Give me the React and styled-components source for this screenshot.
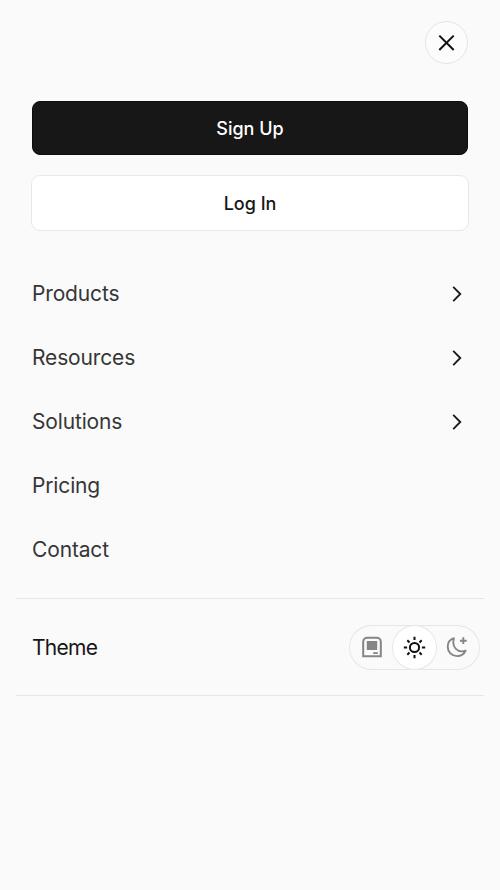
import { useState } from "react";
import styled, { createGlobalStyle } from "styled-components";

const GlobalStyle = createGlobalStyle`
  * {
    box-sizing: border-box;
  }

  body {
    margin: 0;
    background: #fafafa;
    font-family: Inter, "Liberation Sans", sans-serif;
    color: #171717;
  }

  button {
    font-family: inherit;
    color: inherit;
    padding: 0;
    cursor: pointer;
  }
`

const Menu = styled.div`
  min-height: 890px;
  padding: 21px 16px 0;
`

const Header = styled.header`
  display: flex;
  justify-content: flex-end;
  padding-right: 16px;
`

const CloseButton = styled.button`
  display: flex;
  align-items: center;
  justify-content: center;
  width: 43px;
  height: 43px;
  border: 1px solid #e4e4e4;
  border-radius: 50%;
  background: #fcfcfc;
`

const Actions = styled.div`
  display: flex;
  flex-direction: column;
  gap: 20px;
  padding: 37px 15px 0;
`

const ActionButton = styled.button`
  height: ${({ $primary }) => ($primary ? "54px" : "56px")};
  margin: ${({ $primary }) => ($primary ? "0 1px" : "0")};
  padding-top: 2px;
  border: 1px solid ${({ $primary }) => ($primary ? "#0c0c0c" : "#e8e8e8")};
  border-radius: ${({ $primary }) => ($primary ? "8px" : "9px")};
  background: ${({ $primary }) => ($primary ? "#171717" : "#fff")};
  color: ${({ $primary }) => ($primary ? "#fff" : "#171717")};
  font-size: 18px;
  font-weight: 500;
  line-height: 24px;
`

const Nav = styled.nav`
  display: flex;
  flex-direction: column;
  padding: 30px 16px 17px;
`

const NavItem = styled.button`
  display: flex;
  align-items: center;
  justify-content: space-between;
  height: 64px;
  padding: 1px 5px 0 0;
  border: none;
  background: none;
  color: #363636;
  font-size: 21px;
  font-weight: 400;
  letter-spacing: -0.15px;
`

const ThemeRow = styled.div`
  display: flex;
  align-items: center;
  justify-content: space-between;
  height: 98px;
  padding: 0 4px 0 16px;
  border-top: 1px solid #e6e6e6;
  border-bottom: 1px solid #e6e6e6;
  font-size: 21px;
  letter-spacing: -0.7px;
`

const ThemeSwitch = styled.div`
  display: flex;
  align-items: center;
  justify-content: space-between;
  width: 131px;
  height: 45px;
  border-radius: 23px;
  box-shadow: inset 0 0 0 1px #e6e6e6;
`

const ThemeOption = styled.button`
  display: flex;
  align-items: center;
  justify-content: center;
  width: ${({ $active }) => ($active ? "45px" : "43px")};
  height: 45px;
  border: none;
  border-radius: 50%;
  background: ${({ $active }) => ($active ? "#fff" : "transparent")};
  box-shadow: ${({ $active }) => ($active ? "inset 0 0 0 1px #e6e6e6" : "none")};
  color: ${({ $active }) => ($active ? "#111" : "#858585")};

  &:first-child {
    padding-left: 3px;
  }

  &:last-child {
    padding-right: 3px;
  }
`

const CloseIcon = () => (
    <svg width="17" height="17" viewBox="0 0 17 17" fill="none" stroke="#111" strokeWidth="2">
        <path d="M1.3 1.6L15.7 16M15.7 1.6L1.3 16" />
    </svg>
)

const ChevronIcon = () => (
    <svg width="12" height="16" viewBox="0 0 12 16" fill="none" stroke="#171717" strokeWidth="1.8">
        <path d="M2.2 0.9L9.3 8L2.2 15.1" />
    </svg>
)

const DeviceIcon = () => (
    <svg width="22" height="22" viewBox="0 0 22 22" fill="none">
        <path
            d="M2.2 20.2V5.7C2.2 3.5 3.9 1.7 6.2 1.7H15.8C18.1 1.7 19.8 3.5 19.8 5.7V20.2Z"
            stroke="currentColor"
            strokeWidth="2"
        />
        <rect x="5.8" y="5" width="10.4" height="9" rx="0.6" fill="currentColor" />
        <path d="M12.2 17.1H16.8" stroke="currentColor" strokeWidth="1.8" />
    </svg>
)

const SunIcon = () => (
    <svg width="23" height="23" viewBox="0 0 23 23" fill="none" stroke="currentColor" strokeWidth="2">
        <circle cx="11.5" cy="11.5" r="4.6" />
        <path d="M11.5 0.8V4.1M11.5 18.9V22.2M0.8 11.5H4.1M18.9 11.5H22.2" />
        <path d="M4.3 4.3L6.5 6.5M16.5 16.5L18.7 18.7M4.3 18.7L6.5 16.5M16.5 6.5L18.7 4.3" />
    </svg>
)

const MoonIcon = () => (
    <svg width="22" height="22" viewBox="0 0 22 22" fill="none" stroke="currentColor" strokeWidth="1.9">
        <path
            d="M7.9 2.2C4.2 3.4 1.7 6.7 1.7 10.8C1.7 16 5.8 20.1 11 20.1C14.9 20.1 18.2 17.8 19.6 14.6C18.5 15.1 17.3 15.4 16 15.4C11.2 15.4 7.3 11.5 7.3 6.7C7.3 5.1 7.5 3.6 7.9 2.2Z"
            strokeLinejoin="round"
        />
        <path d="M17.3 1.3V8.1M13.9 4.7H20.7" />
    </svg>
)

const navItems = [
    { label: "Products", expandable: true },
    { label: "Resources", expandable: true },
    { label: "Solutions", expandable: true },
    { label: "Pricing" },
    { label: "Contact" },
]

const themes = [
    { name: "system", icon: DeviceIcon },
    { name: "light", icon: SunIcon },
    { name: "dark", icon: MoonIcon },
]

const App = () => {
    const [theme, setTheme] = useState("light");

    return (
        <>
            <GlobalStyle />
            <Menu>
                <Header>
                    <CloseButton>
                        <CloseIcon />
                    </CloseButton>
                </Header>
                <Actions>
                    <ActionButton $primary>Sign Up</ActionButton>
                    <ActionButton>Log In</ActionButton>
                </Actions>
                <Nav>
                    {navItems.map(({ label, expandable }) => (
                        <NavItem key={label}>
                            {label}
                            {expandable && <ChevronIcon />}
                        </NavItem>
                    ))}
                </Nav>
                <ThemeRow>
                    Theme
                    <ThemeSwitch>
                        {themes.map(({ name, icon: Icon }) => (
                            <ThemeOption
                                key={name}
                                $active={name === theme}
                                onClick={() => setTheme(name)}
                            >
                                <Icon />
                            </ThemeOption>
                        ))}
                    </ThemeSwitch>
                </ThemeRow>
            </Menu>
        </>
    );
}

export default App;
